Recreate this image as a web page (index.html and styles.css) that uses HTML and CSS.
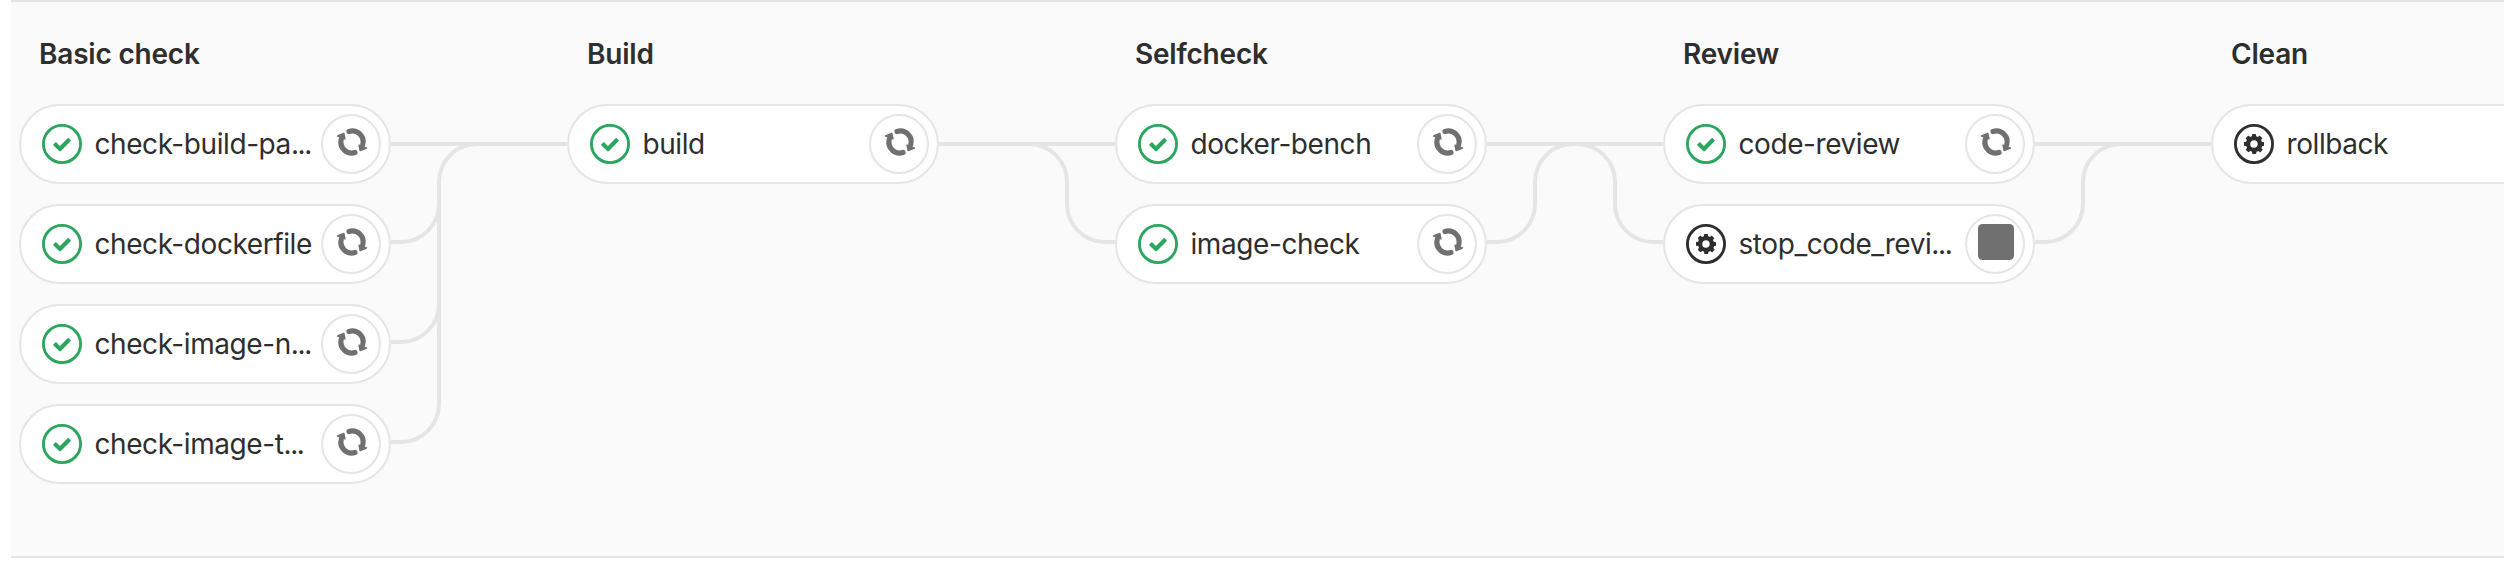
FILE: index.html
```
<!DOCTYPE html>
<html lang="en">
<head>
<meta charset="utf-8">
<title>Pipeline</title>
<link rel="stylesheet" href="styles.css">
</head>
<body>
<svg class="defs" width="0" height="0" aria-hidden="true">
  <symbol id="passed" viewBox="0 0 14 14">
    <circle cx="7" cy="7" r="6.5" fill="none" stroke="currentColor"/>
    <path fill="currentColor" d="M6.278 7.697L5.045 6.464a.296.296 0 0 0-.42-.002l-.613.614a.298.298 0 0 0 .002.42l1.91 1.909a.5.5 0 0 0 .703.005l.265-.265L9.997 6.04a.291.291 0 0 0-.009-.408l-.614-.614a.29.29 0 0 0-.408-.009L6.278 7.697z"/>
  </symbol>
  <symbol id="manual" viewBox="0 0 14 14">
    <circle cx="7" cy="7" r="6.5" fill="none" stroke="currentColor"/>
    <path fill="currentColor" d="M10.5 7.63V6.37l-.787-.13c-.044-.175-.132-.349-.263-.61l.481-.652-.918-.913-.657.478a2.346 2.346 0 0 0-.612-.26L7.613 3.5H6.387l-.132.783c-.219.043-.394.13-.612.26l-.657-.478-.918.913.437.652c-.131.218-.175.392-.262.61l-.744.086v1.261l.787.13c.044.218.132.392.263.61l-.438.651.92.913.655-.434c.175.086.394.173.613.26l.131.783h1.313l.131-.783c.219-.043.394-.13.613-.26l.656.478.918-.913-.48-.652c.13-.218.218-.435.262-.61l.656-.13zM7 8.283a1.285 1.285 0 0 1-1.313-1.305c0-.739.57-1.304 1.313-1.304.744 0 1.313.565 1.313 1.304 0 .74-.57 1.305-1.313 1.305z"/>
  </symbol>
  <symbol id="retry" viewBox="-18 -18 36 36">
    <g id="retry-half">
      <path fill="none" stroke="currentColor" stroke-width="5.2" stroke-linecap="round" d="M-3 -10.5A10.9 10.9 0 0 1 10.8 2.5"/>
      <path fill="currentColor" stroke="currentColor" stroke-width="1.6" stroke-linejoin="round" d="M7.1 3.2L14.4 6L8.2 8.4z"/>
    </g>
    <use href="#retry-half" transform="rotate(180)"/>
  </symbol>
  <symbol id="stop" viewBox="-18 -18 36 36">
    <rect x="-18" y="-18" width="36" height="36" rx="4.5" fill="currentColor"/>
  </symbol>
</svg>

<main class="pipeline">
  <section class="stage">
    <h2 class="stage-name">Basic check</h2>
    <ul class="jobs">
      <li class="job"><svg class="status passed"><use href="#passed"/></svg><span class="name">check-build-pa<span class="dots">...</span></span><button class="action"><svg class="action-icon"><use href="#retry"/></svg></button></li>
      <li class="job"><svg class="status passed"><use href="#passed"/></svg><span class="name">check-dockerfile</span><button class="action"><svg class="action-icon"><use href="#retry"/></svg></button></li>
      <li class="job"><svg class="status passed"><use href="#passed"/></svg><span class="name">check-image-n<span class="dots">...</span></span><button class="action"><svg class="action-icon"><use href="#retry"/></svg></button></li>
      <li class="job"><svg class="status passed"><use href="#passed"/></svg><span class="name">check-image-t<span class="dots">...</span></span><button class="action"><svg class="action-icon"><use href="#retry"/></svg></button></li>
    </ul>
  </section>

  <svg class="links" viewBox="0 0 176 380">
    <path d="M0 40H176M0 138H10A38 38 0 0 0 48 100M0 238H10A38 38 0 0 0 48 200M0 338H10A38 38 0 0 0 48 300V78A38 38 0 0 1 86 40"/>
  </svg>

  <section class="stage">
    <h2 class="stage-name">Build</h2>
    <ul class="jobs">
      <li class="job"><svg class="status passed"><use href="#passed"/></svg><span class="name">build</span><button class="action"><svg class="action-icon"><use href="#retry"/></svg></button></li>
    </ul>
  </section>

  <svg class="links" viewBox="0 0 176 380">
    <path d="M0 40H176M176 138H166A38 38 0 0 1 128 100V78A38 38 0 0 0 90 40"/>
  </svg>

  <section class="stage">
    <h2 class="stage-name">Selfcheck</h2>
    <ul class="jobs">
      <li class="job"><svg class="status passed"><use href="#passed"/></svg><span class="name">docker-bench</span><button class="action"><svg class="action-icon"><use href="#retry"/></svg></button></li>
      <li class="job"><svg class="status passed"><use href="#passed"/></svg><span class="name">image-check</span><button class="action"><svg class="action-icon"><use href="#retry"/></svg></button></li>
    </ul>
  </section>

  <svg class="links" viewBox="0 0 176 380">
    <path d="M0 40H176M0 138H10A38 38 0 0 0 48 100V78A38 38 0 0 1 86 40M176 138H166A38 38 0 0 1 128 100V78A38 38 0 0 0 90 40"/>
  </svg>

  <section class="stage">
    <h2 class="stage-name">Review</h2>
    <ul class="jobs">
      <li class="job"><svg class="status passed"><use href="#passed"/></svg><span class="name">code-review</span><button class="action"><svg class="action-icon"><use href="#retry"/></svg></button></li>
      <li class="job"><svg class="status manual"><use href="#manual"/></svg><span class="name">stop_code_revi<span class="dots">...</span></span><button class="action"><svg class="action-icon"><use href="#stop"/></svg></button></li>
    </ul>
  </section>

  <svg class="links" viewBox="0 0 176 380">
    <path d="M0 40H176M0 138H10A38 38 0 0 0 48 100V78A38 38 0 0 1 86 40"/>
  </svg>

  <section class="stage">
    <h2 class="stage-name">Clean</h2>
    <ul class="jobs">
      <li class="job"><svg class="status manual"><use href="#manual"/></svg><span class="name">rollback</span></li>
    </ul>
  </section>
</main>
</body>
</html>
```
FILE: styles.css
```
* {
  box-sizing: border-box;
}

body {
  margin: 0;
  height: 562px;
  overflow: hidden;
  background: #fff;
  color: #2e2e2e;
  font-family: Inter, "Liberation Sans", sans-serif;
  font-size: 28px;
}

.defs {
  display: block;
}

.pipeline {
  display: flex;
  height: 558px;
  margin-left: 11px;
  padding-left: 8px;
  overflow: hidden;
  background: #fafafa;
  border-top: 2px solid #e5e5e5;
  border-bottom: 2px solid #e5e5e5;
}

.stage {
  flex: none;
  width: 372px;
}

.stage-name {
  height: 102px;
  margin: 0;
  padding: 32px 0 0 20px;
  font-size: 28px;
  font-weight: 600;
  line-height: 40px;
  letter-spacing: -0.2px;
}

.jobs {
  display: flex;
  flex-direction: column;
  gap: 20px;
  margin: 0;
  padding: 0;
  list-style: none;
}

.job {
  display: flex;
  align-items: center;
  height: 80px;
  padding: 0 8px 0 21px;
  background: #fff;
  border: 2px solid #e5e5e5;
  border-radius: 40px;
}

.status {
  flex: none;
  width: 40px;
  height: 40px;
}

.passed {
  color: #2ca55f;
}

.manual {
  color: #2e2e2e;
}

.name {
  flex: 1;
  margin-left: 12.5px;
  white-space: nowrap;
  line-height: 40px;
  letter-spacing: -0.42px;
}

.dots {
  letter-spacing: -1.4px;
}

.action {
  display: flex;
  flex: none;
  align-items: center;
  justify-content: center;
  width: 60px;
  height: 60px;
  padding: 0 0 4px 2px;
  background: #fff;
  border: 2px solid #e5e5e5;
  border-radius: 50%;
  color: #707070;
}

.action-icon {
  flex: none;
  width: 36px;
  height: 36px;
}

.links {
  flex: none;
  width: 176px;
  height: 380px;
  margin-top: 102px;
  fill: none;
  stroke: #e5e5e5;
  stroke-width: 4;
}
```
